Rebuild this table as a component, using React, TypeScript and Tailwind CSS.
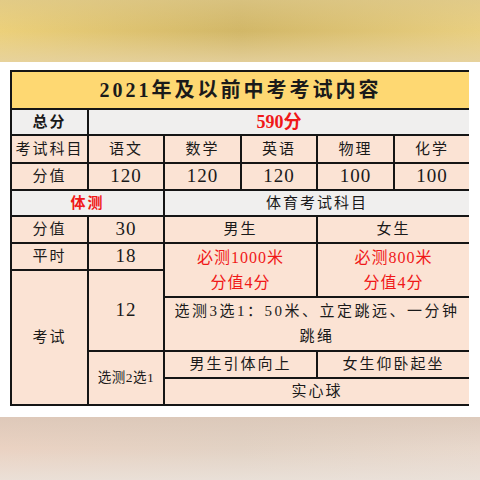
const serif = "font-['Liberation_Serif','Noto_Sans_CJK_SC',serif]";

function Cell({ className = "", children }: { className?: string; children?: React.ReactNode }) {
  return (
    <div className={`flex items-center justify-center text-center text-[#1a1a1a] ${className}`}>
      {children}
    </div>
  );
}

const peach = "bg-[#fbe3d4]";
const gray = "bg-[#f0efee]";
const label = "text-[15px] tracking-[2px]";
const num = "text-[19px] tracking-[1px]";

export default function App() {
  return (
    <div className={`w-[480px] h-[480px] flex flex-col bg-white ${serif}`}>
      {/* blurred top band */}
      <div className="h-[62px] bg-gradient-to-r from-[#ecd07a] via-[#d2b767] to-[#e9cf80]">
        <div className="h-full bg-gradient-to-b from-[#dcc88e]/60 via-transparent to-[#e6d3a4]/80" />
      </div>

      <div className="flex-1 pt-[8px] pl-[10px]">
        <div className="grid w-[459px] grid-cols-[75px_74px_75px_74px_75px_74px] grid-rows-[36px_24px_26px_25px_24px_25px_25px_25px_52px_25px_25px] gap-[2px] p-[2px] bg-[#151515]">
          {/* title */}
          <Cell className="col-span-6 bg-[#fed872] text-[20px] font-bold tracking-[3px]">2021年及以前中考考试内容</Cell>

          {/* total */}
          <Cell className={`${gray} ${label} font-bold`}>总分</Cell>
          <Cell className={`col-span-5 ${gray} text-[18px] font-bold text-[#f01818]`}>590分</Cell>

          {/* subjects */}
          <Cell className={`${peach} ${label}`}>考试科目</Cell>
          <Cell className={`${peach} ${label}`}>语文</Cell>
          <Cell className={`${peach} ${label}`}>数学</Cell>
          <Cell className={`${peach} ${label}`}>英语</Cell>
          <Cell className={`${peach} ${label}`}>物理</Cell>
          <Cell className={`${peach} ${label}`}>化学</Cell>

          <Cell className={`${peach} ${label}`}>分值</Cell>
          <Cell className={`${peach} ${num}`}>120</Cell>
          <Cell className={`${peach} ${num}`}>120</Cell>
          <Cell className={`${peach} ${num}`}>120</Cell>
          <Cell className={`${peach} ${num}`}>100</Cell>
          <Cell className={`${peach} ${num}`}>100</Cell>

          {/* PE */}
          <Cell className={`col-span-2 ${gray} ${label} font-bold text-[#f01818]`}>体测</Cell>
          <Cell className={`col-span-4 ${gray} ${label}`}>体育考试科目</Cell>

          <Cell className={`${peach} ${label}`}>分值</Cell>
          <Cell className={`${peach} ${num}`}>30</Cell>
          <Cell className={`col-span-2 ${peach} ${label}`}>男生</Cell>
          <Cell className={`col-span-2 ${peach} ${label}`}>女生</Cell>

          <Cell className={`${peach} ${label}`}>平时</Cell>
          <Cell className={`${peach} ${num}`}>18</Cell>
          <Cell className={`col-start-3 col-span-2 row-span-2 ${peach} text-[16px] leading-[25px] tracking-[1px] text-[#f01818]`}>
            必测1000米<br />分值4分
          </Cell>
          <Cell className={`col-start-5 col-span-2 row-span-2 ${peach} text-[16px] leading-[25px] tracking-[1px] text-[#f01818]`}>
            必测800米<br />分值4分
          </Cell>

          <Cell className={`col-start-1 row-span-4 ${peach} ${label}`}>考试</Cell>
          <Cell className={`col-start-2 row-span-2 ${peach} ${num}`}>12</Cell>

          <Cell className={`col-start-3 col-span-4 ${peach} text-[15px] leading-[25px] tracking-[2.5px]`}>
            选测3选1：50米、立定跳远、一分钟<br />跳绳
          </Cell>

          <Cell className={`col-start-2 row-span-2 ${peach} text-[13.5px] tracking-[0.5px]`}>选测2选1</Cell>
          <Cell className={`col-start-3 col-span-2 ${peach} ${label}`}>男生引体向上</Cell>
          <Cell className={`col-start-5 col-span-2 ${peach} ${label}`}>女生仰卧起坐</Cell>

          <Cell className={`col-start-3 col-span-4 ${peach} ${label}`}>实心球</Cell>
        </div>
      </div>

      {/* blurred bottom band */}
      <div className="h-[63px] bg-gradient-to-r from-[#ead2c2] via-[#e2d2c4] to-[#e8d8cc]">
        <div className="h-full bg-gradient-to-b from-[#d9c5b6]/70 via-transparent to-[#ebe3dc]/80" />
      </div>
    </div>
  );
}
